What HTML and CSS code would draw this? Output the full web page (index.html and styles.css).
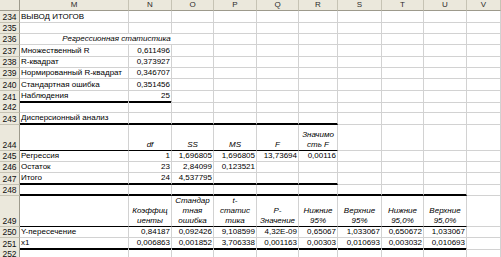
FILE: index.html
```html
<!DOCTYPE html>
<html>
<head>
<meta charset="utf-8">
<link rel="stylesheet" href="styles.css">
</head>
<body>
<div class="sheet">
  <div class="row h11 head">
    <div class="corner"></div>
    <div class="ch">M</div><div class="ch">N</div><div class="ch">O</div><div class="ch">P</div><div class="ch">Q</div><div class="ch">R</div><div class="ch">S</div><div class="ch">T</div><div class="ch">U</div><div class="ch">V</div>
  </div>

  <div class="row h12">
    <div class="rn">234</div>
    <div class="c">ВЫВОД ИТОГОВ</div><div class="c"></div><div class="c"></div><div class="c"></div><div class="c"></div><div class="c"></div><div class="c"></div><div class="c"></div><div class="c"></div><div class="c"></div>
  </div>
  <div class="row h11">
    <div class="rn">235</div>
    <div class="c"></div><div class="c"></div><div class="c"></div><div class="c"></div><div class="c"></div><div class="c"></div><div class="c"></div><div class="c"></div><div class="c"></div><div class="c"></div>
  </div>
  <div class="row h11">
    <div class="rn">236</div>
    <div class="c span3 i ctr">Регрессионная статистика</div><div class="c"></div><div class="c"></div><div class="c"></div><div class="c"></div><div class="c"></div><div class="c"></div><div class="c"></div>
  </div>
  <div class="row h12">
    <div class="rn">237</div>
    <div class="c">Множественный R</div><div class="c r">0,611496</div><div class="c"></div><div class="c"></div><div class="c"></div><div class="c"></div><div class="c"></div><div class="c"></div><div class="c"></div><div class="c"></div>
  </div>
  <div class="row h11">
    <div class="rn">238</div>
    <div class="c">R-квадрат</div><div class="c r">0,373927</div><div class="c"></div><div class="c"></div><div class="c"></div><div class="c"></div><div class="c"></div><div class="c"></div><div class="c"></div><div class="c"></div>
  </div>
  <div class="row h11">
    <div class="rn">239</div>
    <div class="c">Нормированный R-квадрат</div><div class="c r">0,346707</div><div class="c"></div><div class="c"></div><div class="c"></div><div class="c"></div><div class="c"></div><div class="c"></div><div class="c"></div><div class="c"></div>
  </div>
  <div class="row h12">
    <div class="rn">240</div>
    <div class="c">Стандартная ошибка</div><div class="c r">0,351456</div><div class="c"></div><div class="c"></div><div class="c"></div><div class="c"></div><div class="c"></div><div class="c"></div><div class="c"></div><div class="c"></div>
  </div>
  <div class="row h11">
    <div class="rn">241</div>
    <div class="c b2">Наблюдения</div><div class="c r b2">25</div><div class="c"></div><div class="c"></div><div class="c"></div><div class="c"></div><div class="c"></div><div class="c"></div><div class="c"></div><div class="c"></div>
  </div>
  <div class="row h11">
    <div class="rn">242</div>
    <div class="c"></div><div class="c"></div><div class="c"></div><div class="c"></div><div class="c"></div><div class="c"></div><div class="c"></div><div class="c"></div><div class="c"></div><div class="c"></div>
  </div>
  <div class="row h12">
    <div class="rn">243</div>
    <div class="c b2">Дисперсионный анализ</div><div class="c b2"></div><div class="c b2"></div><div class="c b2"></div><div class="c b2"></div><div class="c b2"></div><div class="c"></div><div class="c"></div><div class="c"></div><div class="c"></div>
  </div>
  <div class="row h26">
    <div class="rn">244</div>
    <div class="c b1"></div><div class="c b1 i ctr">df</div><div class="c b1 i ctr">SS</div><div class="c b1 i ctr">MS</div><div class="c b1 i ctr">F</div><div class="c b1 i ctr">Значимо<br>сть F</div><div class="c"></div><div class="c"></div><div class="c"></div><div class="c"></div>
  </div>
  <div class="row h11">
    <div class="rn">245</div>
    <div class="c">Регрессия</div><div class="c r">1</div><div class="c r">1,696805</div><div class="c r">1,696805</div><div class="c r">13,73694</div><div class="c r">0,00116</div><div class="c"></div><div class="c"></div><div class="c"></div><div class="c"></div>
  </div>
  <div class="row h11">
    <div class="rn">246</div>
    <div class="c">Остаток</div><div class="c r">23</div><div class="c r">2,84099</div><div class="c r">0,123521</div><div class="c"></div><div class="c"></div><div class="c"></div><div class="c"></div><div class="c"></div><div class="c"></div>
  </div>
  <div class="row h12">
    <div class="rn">247</div>
    <div class="c b2">Итого</div><div class="c r b2">24</div><div class="c r b2">4,537795</div><div class="c b2"></div><div class="c b2"></div><div class="c b2"></div><div class="c"></div><div class="c"></div><div class="c"></div><div class="c"></div>
  </div>
  <div class="row h11">
    <div class="rn">248</div>
    <div class="c b2"></div><div class="c b2"></div><div class="c b2"></div><div class="c b2"></div><div class="c b2"></div><div class="c b2"></div><div class="c b2"></div><div class="c b2"></div><div class="c b2"></div><div class="c"></div>
  </div>
  <div class="row h31">
    <div class="rn">249</div>
    <div class="c b1"></div>
    <div class="c b1 i ctr">Коэффиц<br>иенты</div>
    <div class="c b1 i ctr">Стандар<br>тная<br>ошибка</div>
    <div class="c b1 i ctr">t-<br>статис<br>тика</div>
    <div class="c b1 i ctr">P-<br>Значение</div>
    <div class="c b1 i ctr">Нижние<br>95%</div>
    <div class="c b1 i ctr">Верхние<br>95%</div>
    <div class="c b1 i ctr">Нижние<br>95,0%</div>
    <div class="c b1 i ctr">Верхние<br>95,0%</div>
    <div class="c"></div>
  </div>
  <div class="row h11">
    <div class="rn">250</div>
    <div class="c">Y-пересечение</div><div class="c r">0,84187</div><div class="c r">0,092426</div><div class="c r">9,108599</div><div class="c r">4,32E-09</div><div class="c r">0,65067</div><div class="c r">1,033067</div><div class="c r">0,650672</div><div class="c r">1,033067</div><div class="c"></div>
  </div>
  <div class="row h11">
    <div class="rn">251</div>
    <div class="c b2">x1</div><div class="c r b2">0,006863</div><div class="c r b2">0,001852</div><div class="c r b2">3,706338</div><div class="c r b2">0,001163</div><div class="c r b2">0,00303</div><div class="c r b2">0,010693</div><div class="c r b2">0,003032</div><div class="c r b2">0,010693</div><div class="c"></div>
  </div>
  <div class="row h11">
    <div class="rn">252</div>
    <div class="c"></div><div class="c"></div><div class="c"></div><div class="c"></div><div class="c"></div><div class="c"></div><div class="c"></div><div class="c"></div><div class="c"></div><div class="c"></div>
  </div>
</div>
</body>
</html>
```

FILE: styles.css
```css
html, body {
  margin: 0;
  padding: 0;
  background: #ffffff;
  overflow: hidden;
}
.sheet {
  width: 501px;
  font-family: "Liberation Sans", Arial, sans-serif;
  font-size: 8px;
  color: #000;
}
.row {
  display: grid;
  grid-template-columns: 20px 109px 43px 42px 43px 42px 39px 44px 42px 43px 34px;
}
.h11 { height: 11px; }
.h12 { height: 12px; }
.h26 { height: 26px; }
.h31 { height: 31px; }

.corner, .ch, .rn {
  background: #ebe8dc;
  box-sizing: border-box;
  color: #2b2b2b;
}
.corner {
  border-right: 1px solid #9d9a8c;
  border-bottom: 1px solid #9d9a8c;
}
.ch {
  border-right: 1px solid #c6c3b4;
  border-bottom: 1px solid #9d9a8c;
  display: flex;
  align-items: center;
  justify-content: center;
  font-size: 8px;
  line-height: 10px;
}
.rn {
  border-right: 1px solid #9d9a8c;
  border-bottom: 1px solid #c6c3b4;
  display: flex;
  align-items: flex-end;
  justify-content: center;
  font-size: 8.5px;
  line-height: 10px;
  color: #111;
}
.c {
  box-sizing: border-box;
  border-right: 1px solid #d2d2d2;
  border-bottom: 1px solid #d2d2d2;
  display: flex;
  flex-direction: column;
  justify-content: flex-end;
  align-items: flex-start;
  padding: 0 1px 0 1px;
  line-height: 10px;
  white-space: nowrap;
  min-width: 0;
}
.r { align-items: flex-end; }
.ctr { align-items: center; text-align: center; }
.i { font-style: italic; }
.span3 {
  grid-column: span 3;
  overflow: visible;
}
.b1 { border-bottom: 1px solid #000; }
.b2 { border-bottom: 2px solid #000; }
```
